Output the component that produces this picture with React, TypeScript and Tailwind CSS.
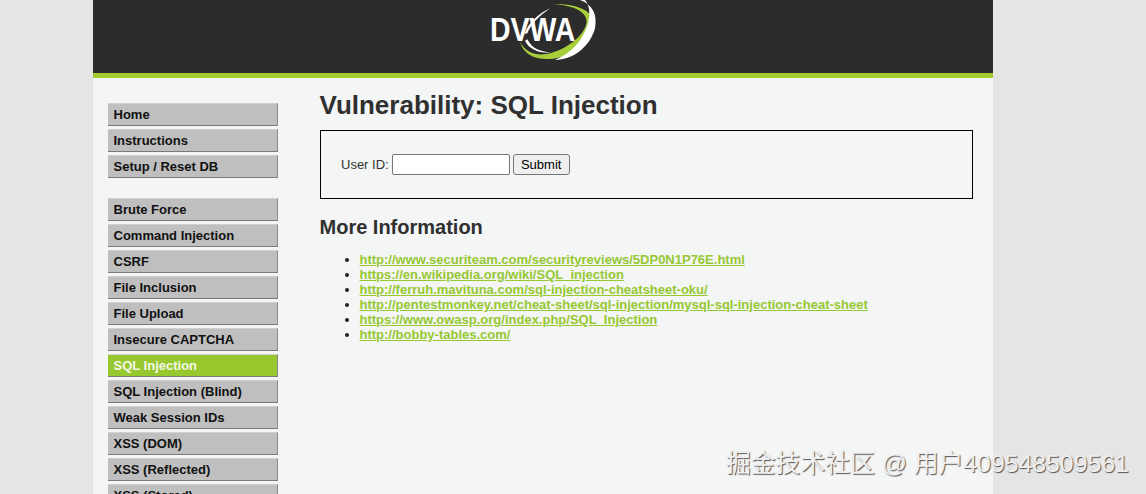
import React from 'react'

const topMenu = ['Home', 'Instructions', 'Setup / Reset DB']
const vulnMenu = [
  'Brute Force',
  'Command Injection',
  'CSRF',
  'File Inclusion',
  'File Upload',
  'Insecure CAPTCHA',
  'SQL Injection',
  'SQL Injection (Blind)',
  'Weak Session IDs',
  'XSS (DOM)',
  'XSS (Reflected)',
  'XSS (Stored)',
]
const links = [
  'http://www.securiteam.com/securityreviews/5DP0N1P76E.html',
  'https://en.wikipedia.org/wiki/SQL_injection',
  'http://ferruh.mavituna.com/sql-injection-cheatsheet-oku/',
  'http://pentestmonkey.net/cheat-sheet/sql-injection/mysql-sql-injection-cheat-sheet',
  'https://www.owasp.org/index.php/SQL_Injection',
  'http://bobby-tables.com/',
]

const Logo = () => (
  <svg width="200" height="73" viewBox="0 0 600 219" className="block">
    {/* green swoosh */}
    <path d="M240 125 C250 165 290 182 340 176 C400 168 450 125 462 75 C468 40 420 10 340 12 C400 16 440 35 440 65 C436 105 380 150 320 162 C285 168 255 155 240 125 Z" fill="#a6ce39" />
    {/* white swoosh */}
    <path d="M345 180 C400 180 450 140 465 85 C472 45 460 15 420 0 L435 0 C448 15 452 40 444 70 C430 120 395 160 345 180 Z" fill="#ffffff" />
    <path d="M255 122 C265 145 295 160 332 158 C300 155 275 145 262 118 Z" fill="#ffffff" />
    <path d="M253 102 C265 70 295 40 332 25 C300 45 275 70 262 100 Z" fill="#ffffff" />
    <text x="150" y="124" fill="#ffffff" fontSize="102" fontWeight="700" textLength="256" lengthAdjust="spacingAndGlyphs" className="font-['Liberation_Sans',sans-serif]">
      DVWA
    </text>
  </svg>
)

const MenuItem = ({ label, active }: { label: string; active?: boolean }) => (
  <li
    className={`h-[23px] pl-[5.5px] border-r border-b border-r-[#8a8a8a] border-b-[#7a7a7a] border-t border-t-[#d0d0d0] text-[13px] leading-[21px] font-bold ${
      active ? 'bg-[#97c92f] text-[#f4f8e8]' : 'bg-[#bfbfbf] text-[#111111]'
    }`}
  >
    {label}
  </li>
)

export default function App() {
  return (
    <div className="relative h-[494px] overflow-hidden bg-[#e5e5e5] font-['Liberation_Sans',Arial,sans-serif]">
      <div className="ml-[93px] w-[900px] h-full bg-[#f4f5f5]">
        <header className="h-[78px] bg-[#2c2c2c] border-b-[5px] border-[#a3cc2e] pl-[347px]">
          <Logo />
        </header>

        <div className="flex">
          <nav className="w-[227px] shrink-0 pl-[15px] pt-[25px]">
            <ul className="w-[170px] flex flex-col gap-[3px]">
              {topMenu.map((m) => (
                <MenuItem key={m} label={m} />
              ))}
            </ul>
            <ul className="w-[170px] mt-[20px] flex flex-col gap-[3px]">
              {vulnMenu.map((m) => (
                <MenuItem key={m} label={m} active={m === 'SQL Injection'} />
              ))}
            </ul>
          </nav>

          <main className="w-[653px] text-[#303030]">
            <h1 className="mt-[12px] -ml-[0.5px] text-[26px] leading-[30px] font-bold">Vulnerability: SQL Injection</h1>
            <div className="mt-[10px] h-[69px] border border-black pl-[20px] pt-[23px] flex items-start text-[13px]">
              <label className="leading-[21px] text-[#333333]">User ID:</label>
              <input
                type="text"
                className="ml-[3px] w-[118px] h-[21px] bg-white border border-[#767676] rounded-[2px]"
              />
              <button className="ml-[3px] w-[57px] h-[21px] bg-[#efefef] border border-[#767676] rounded-[3px] text-[13px] leading-[19px] text-black">
                Submit
              </button>
            </div>
            <h2 className="mt-[16px] -ml-[0.5px] text-[20px] leading-[24px] font-bold">More Information</h2>
            <ul className="mt-[13px] pl-[39.5px] list-disc text-[13px] leading-[15px] font-bold text-[#96c832] marker:text-[#222222]">
              {links.map((l) => (
                <li key={l}>
                  <a className="underline">{l}</a>
                </li>
              ))}
            </ul>
          </main>
        </div>
      </div>

      <div className="absolute left-[726px] top-[449px] text-[24.8px] leading-[30px] whitespace-nowrap text-[#f0f0f0] font-['Liberation_Sans','Noto_Sans_CJK_SC',sans-serif] [text-shadow:1px_1px_1px_#555555]">
        掘金技术社区 @ 用户409548509561
      </div>
    </div>
  )
}
